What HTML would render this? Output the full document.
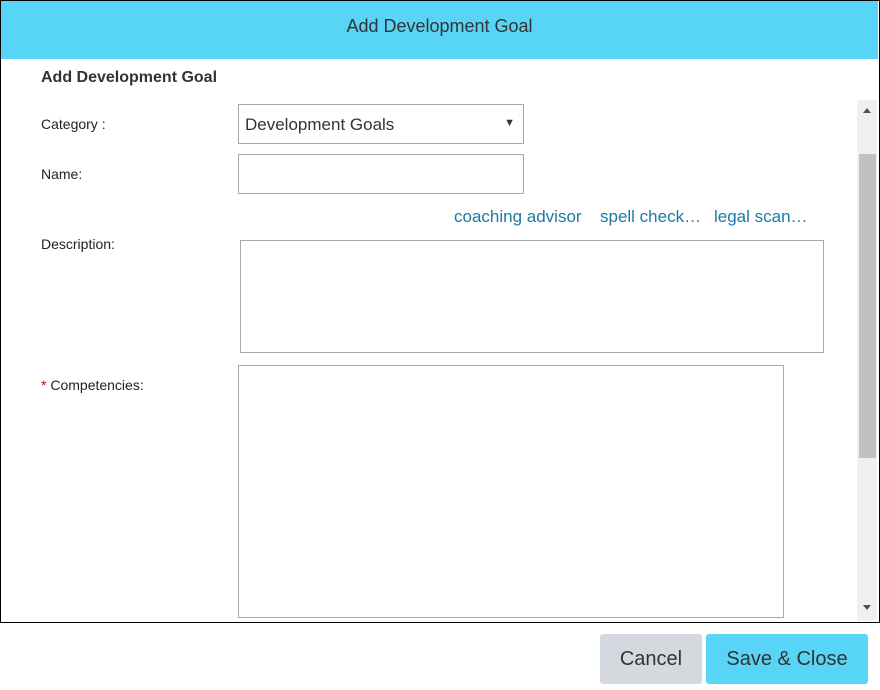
<!DOCTYPE html>
<html><head><style>
body{margin:0;width:880px;height:690px;background:#fff;font-family:"Liberation Sans",sans-serif;position:relative;overflow:hidden}
.a{position:absolute}
.box{position:absolute;border:1px solid #a9a9a9;background:#fff;box-sizing:border-box}
.lbl{position:absolute;font-size:14px;color:#222}
.lnk{position:absolute;font-size:17px;color:#1a7aa8;top:207px}
</style></head><body>
<div class="a" style="left:0;top:0;width:878px;height:621px;border:1px solid #000"></div>
<div class="a" style="left:1px;top:1px;width:877px;height:58px;background:#57d4f6;font-size:18px;color:#333;text-align:center;line-height:50px">Add Development Goal</div>
<div class="a" style="left:41px;top:69px;font-size:16px;font-weight:bold;color:#333">Add Development Goal</div>
<div class="lbl" style="left:41px;top:116px">Category :</div>
<div class="box" style="left:238px;top:104px;width:286px;height:40px;font-size:17px;color:#333;padding:10px 0 0 6px">Development Goals<span style="position:absolute;right:8px;top:12px;font-size:11px">▼</span></div>
<div class="lbl" style="left:41px;top:166px">Name:</div>
<div class="box" style="left:238px;top:154px;width:286px;height:40px"></div>
<div class="lnk" style="left:454px">coaching advisor</div>
<div class="lnk" style="left:600px">spell check…</div>
<div class="lnk" style="left:714px">legal scan…</div>
<div class="lbl" style="left:41px;top:236px">Description:</div>
<div class="box" style="left:240px;top:240px;width:584px;height:113px"></div>
<div class="lbl" style="left:41px;top:377px"><span style="color:#d00">*</span> Competencies:</div>
<div class="box" style="left:238px;top:365px;width:546px;height:253px"></div>
<div class="a" style="left:857px;top:100px;width:20px;height:521px;background:#f0f0f0"></div>
<div class="a" style="left:859px;top:154px;width:17px;height:304px;background:#c1c1c1"></div>
<div class="a" style="left:863px;top:108px;width:0;height:0;border-left:4px solid transparent;border-right:4px solid transparent;border-bottom:5px solid #505050"></div>
<div class="a" style="left:863px;top:605px;width:0;height:0;border-left:4px solid transparent;border-right:4px solid transparent;border-top:5px solid #505050"></div>
<div class="a" style="left:600px;top:634px;width:102px;height:50px;background:#d3d9df;border-radius:3px;font-size:20px;color:#333;text-align:center;line-height:50px">Cancel</div>
<div class="a" style="left:706px;top:634px;width:162px;height:50px;background:#57d4f6;border-radius:3px;font-size:20px;color:#333;text-align:center;line-height:50px">Save &amp; Close</div>
</body></html>
